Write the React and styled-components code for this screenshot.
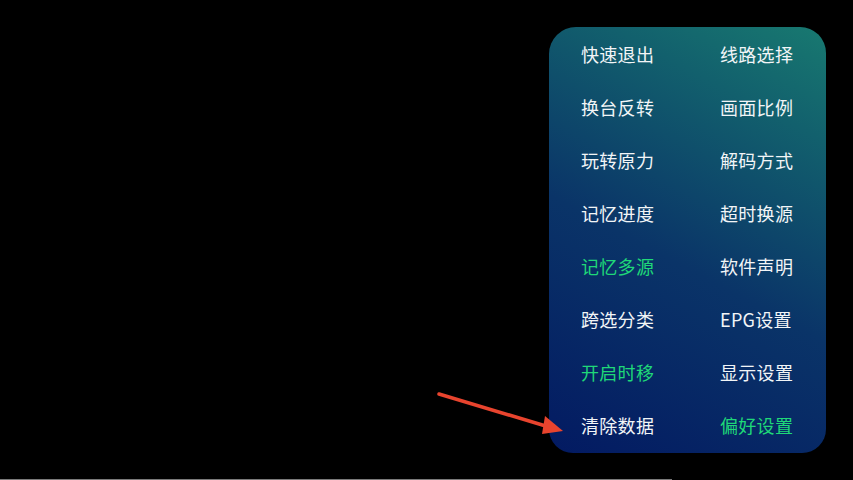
import React from "react";
import styled, { createGlobalStyle } from "styled-components";

const GlobalStyle = createGlobalStyle`
  html, body {
    margin: 0;
    padding: 0;
    background: #000;
  }
  body {
    font-family: "Noto Sans CJK SC", "Noto Sans", sans-serif;
  }
`;

const items = [
  { label: "快速退出" },
  { label: "线路选择" },
  { label: "换台反转" },
  { label: "画面比例" },
  { label: "玩转原力" },
  { label: "解码方式" },
  { label: "记忆进度" },
  { label: "超时换源" },
  { label: "记忆多源", active: true },
  { label: "软件声明" },
  { label: "跨选分类" },
  { label: "EPG设置" },
  { label: "开启时移", active: true },
  { label: "显示设置" },
  { label: "清除数据" },
  { label: "偏好设置", active: true },
];

const App = () => {
  return (
    <Screen>
      <GlobalStyle />
      <Stage>
        <Menu>
          {items.map((item) => (
            <Item key={item.label} $active={item.active}>
              {item.label}
            </Item>
          ))}
        </Menu>
        <Arrow width="140" height="50" viewBox="0 0 140 50">
          <line x1="2" y1="2" x2="112" y2="35" stroke="#e8442e" strokeWidth="3.5" strokeLinecap="round" />
          <polygon points="108,24 126,39 105,42" fill="#e8442e" />
        </Arrow>
      </Stage>
      <BottomLine />
    </Screen>
  );
};

export default App;

const Screen = styled.div`
  width: 853px;
  height: 480px;
  display: flex;
  flex-direction: column;
  background: #000;
  overflow: hidden;
`;

const Stage = styled.div`
  position: relative;
  flex: 1;
  display: flex;
  justify-content: flex-end;
  align-items: flex-start;
  padding: 27px 27px 0 0;
`;

const Menu = styled.div`
  width: 277px;
  height: 426px;
  box-sizing: border-box;
  padding: 0 0 1px 32px;
  border-radius: 27px 26px 24px 24px;
  background: linear-gradient(28deg, #031a62 0%, #0a3468 45%, #12606d 80%, #187970 100%);
  display: grid;
  grid-template-columns: 139px 1fr;
  grid-template-rows: repeat(8, 1fr);
`;

const Item = styled.div`
  display: flex;
  align-items: center;
  font-size: 18px;
  letter-spacing: 0.3px;
  color: ${(p) => (p.$active ? "#1fd878" : "#f2f5f7")};
  white-space: nowrap;
`;

const Arrow = styled.svg`
  position: absolute;
  left: 437px;
  top: 392px;
`;

const BottomLine = styled.div`
  height: 1px;
  width: 672px;
  background: #7a7a7a;
`;
